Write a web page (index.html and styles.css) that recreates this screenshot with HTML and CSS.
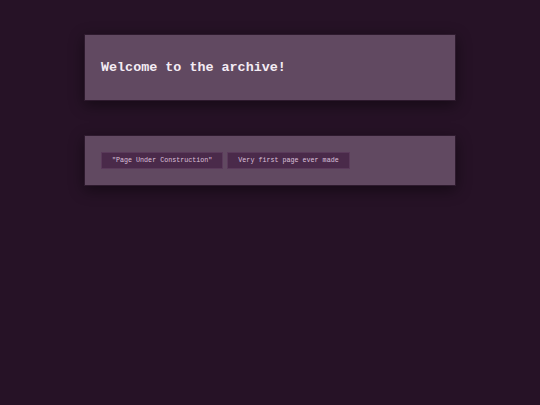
FILE: index.html
```html
<!DOCTYPE html>
<html>
<head>
<meta charset="utf-8">
<link rel="stylesheet" href="styles.css">
</head>
<body>
<main class="page">
  <section class="card">
    <h1 class="title">Welcome to the archive!</h1>
  </section>
  <section class="card">
    <div class="tags">
      <span class="tag">"Page Under Construction"</span>
      <span class="tag">Very first page ever made</span>
    </div>
  </section>
</main>
</body>
</html>
```

FILE: styles.css
```css
html, body {
  margin: 0;
  padding: 0;
  background: #261226;
  height: 100%;
}
.page {
  width: 372px;
  margin: 0 auto;
  padding-top: 34px;
  display: flex;
  flex-direction: column;
  gap: 34px;
  font-family: "Liberation Mono", "Courier New", monospace;
}
.card {
  background: #614961;
  border: 1px solid #2e1a2e;
  padding: 16px;
  box-shadow: 0 4px 14px rgba(0, 0, 0, 0.45);
}
.title {
  margin: 0;
  font-size: 13.4px;
  line-height: 33px;
  font-weight: bold;
  color: #f4ecf4;
}
.tags {
  display: flex;
  gap: 4px;
}
.tag {
  background: #4a2a4a;
  border: 1px solid #5a3a5a;
  color: #dcc0dc;
  font-size: 6.7px;
  line-height: 15px;
  padding: 0 10px;
  white-space: pre;
}
```
